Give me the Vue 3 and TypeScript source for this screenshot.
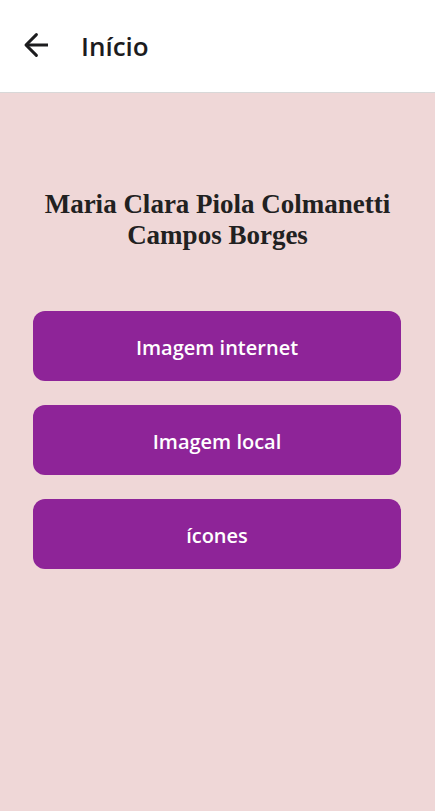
<script setup lang="ts">
interface MenuItem {
  id: string
  label: string
}

const title: string = 'Início'
const author: string = 'Maria Clara Piola Colmanetti Campos Borges'
const items: MenuItem[] = [
  { id: 'internet', label: 'Imagem internet' },
  { id: 'local', label: 'Imagem local' },
  { id: 'icones', label: 'ícones' },
]
</script>

<template>
  <div class="screen">
    <header class="header">
      <button class="back" type="button" aria-label="Voltar">
        <svg viewBox="0 0 32 32" width="32" height="32" fill="none" stroke="currentColor" stroke-width="3" aria-hidden="true">
          <path d="M28 16H6" />
          <path d="M16.4 5.6L6 16L16.4 26.4" stroke-linecap="round" stroke-linejoin="round" />
        </svg>
      </button>
      <h1 class="title">{{ title }}</h1>
    </header>
    <main class="content">
      <h2 class="author">{{ author }}</h2>
      <nav class="menu">
        <button v-for="item in items" :key="item.id" class="item" type="button">{{ item.label }}</button>
      </nav>
    </main>
  </div>
</template>

<style>
body {
  margin: 0;
}
</style>

<style scoped>
.screen {
  display: flex;
  flex-direction: column;
  min-height: 100vh;
  background: #efd7d7;
  color: #1c1c1e;
  font-family: "Open Sans", "Noto Sans", sans-serif;
}

.header {
  display: flex;
  align-items: center;
  gap: 29px;
  height: 90px;
  padding: 0 20px 2px;
  background: #fff;
  border-bottom: 1px solid #d8d8d8;
}

.back {
  display: flex;
  padding: 0;
  border: 0;
  background: none;
  color: inherit;
  cursor: pointer;
}

.title {
  margin: 0;
  padding-top: 2px;
  font-size: 26px;
  font-weight: 600;
  line-height: 32px;
}

.content {
  display: flex;
  flex-direction: column;
  gap: 60px;
  padding: 96px 33px 32px;
}

.author {
  margin: 0;
  color: #212121;
  font-family: "Liberation Serif", serif;
  font-size: 27px;
  font-weight: 700;
  line-height: 31px;
  text-align: center;
}

.menu {
  display: flex;
  flex-direction: column;
  gap: 24px;
  padding-right: 1px;
}

.item {
  height: 70px;
  padding: 4px 16px 0;
  border: 0;
  border-radius: 12px;
  background: #8e2498;
  color: #fff;
  font-family: inherit;
  font-size: 20px;
  font-weight: 600;
  line-height: 28px;
  cursor: pointer;
}
</style>
